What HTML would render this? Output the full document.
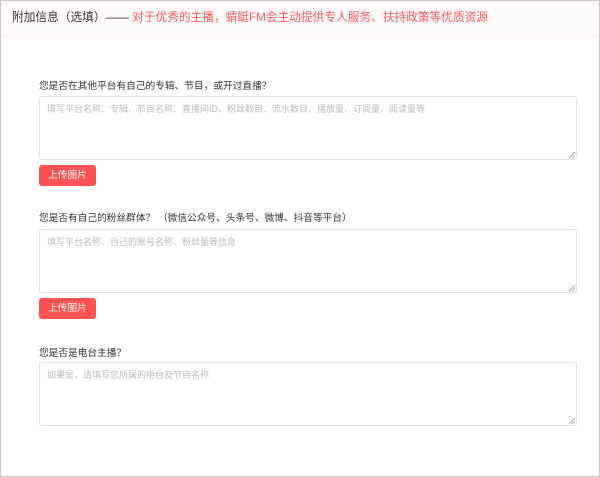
<!DOCTYPE html>
<html><head><meta charset="utf-8"><style>
*{margin:0;padding:0;box-sizing:border-box}
body{width:600px;height:477px;overflow:hidden;background:#fff;font-family:"Liberation Sans","Noto Sans CJK SC",sans-serif}
.page{position:absolute;left:0;top:0;width:600px;height:477px;border:1px solid #c8c8c8}
.hd{height:36px;background:#fff9f9;border-bottom:1px solid #f3eeee;padding-left:11px;line-height:34px;font-size:11.7px;color:#333}
.hd span{color:#ff5a5a}
.lbl{position:absolute;left:38px;font-size:9.7px;color:#333}
.ta{position:absolute;left:38px;width:538px;height:64px;border:1px solid #dedede;border-radius:3px;padding:5px 7px;font-size:9px;color:#bbb}
.ta:after{content:"";position:absolute;right:1px;bottom:1px;width:6px;height:6px;background:linear-gradient(135deg,transparent 45%,#aaa 46%,#aaa 55%,transparent 56%,transparent 70%,#aaa 71%,#aaa 80%,transparent 81%)}
.btn{position:absolute;left:38px;width:57px;height:21px;background:#ff5353;border-radius:3px;color:#fff;font-size:9.7px;text-align:center;line-height:21px}
</style></head><body><div class="page">
<div class="hd">附加信息（选填）—— <span>对于优秀的主播，蜻蜓FM会主动提供专人服务、扶持政策等优质资源</span></div>
<div class="lbl" style="top:77px">您是否在其他平台有自己的专辑、节目，或开过直播？</div>
<div class="ta" style="top:95px">填写平台名称、专辑、节目名称、直播间ID、粉丝数目、流水数目、播放量、订阅量、阅读量等</div>
<div class="btn" style="top:164px">上传图片</div>
<div class="lbl" style="top:209px">您是否有自己的粉丝群体？ （微信公众号、头条号、微博、抖音等平台）</div>
<div class="ta" style="top:228px">填写平台名称、自己的账号名称、粉丝量等信息</div>
<div class="btn" style="top:297px">上传图片</div>
<div class="lbl" style="top:344px">您是否是电台主播？</div>
<div class="ta" style="top:361px">如果是，请填写您所属的电台及节目名称</div>
</div></body></html>
